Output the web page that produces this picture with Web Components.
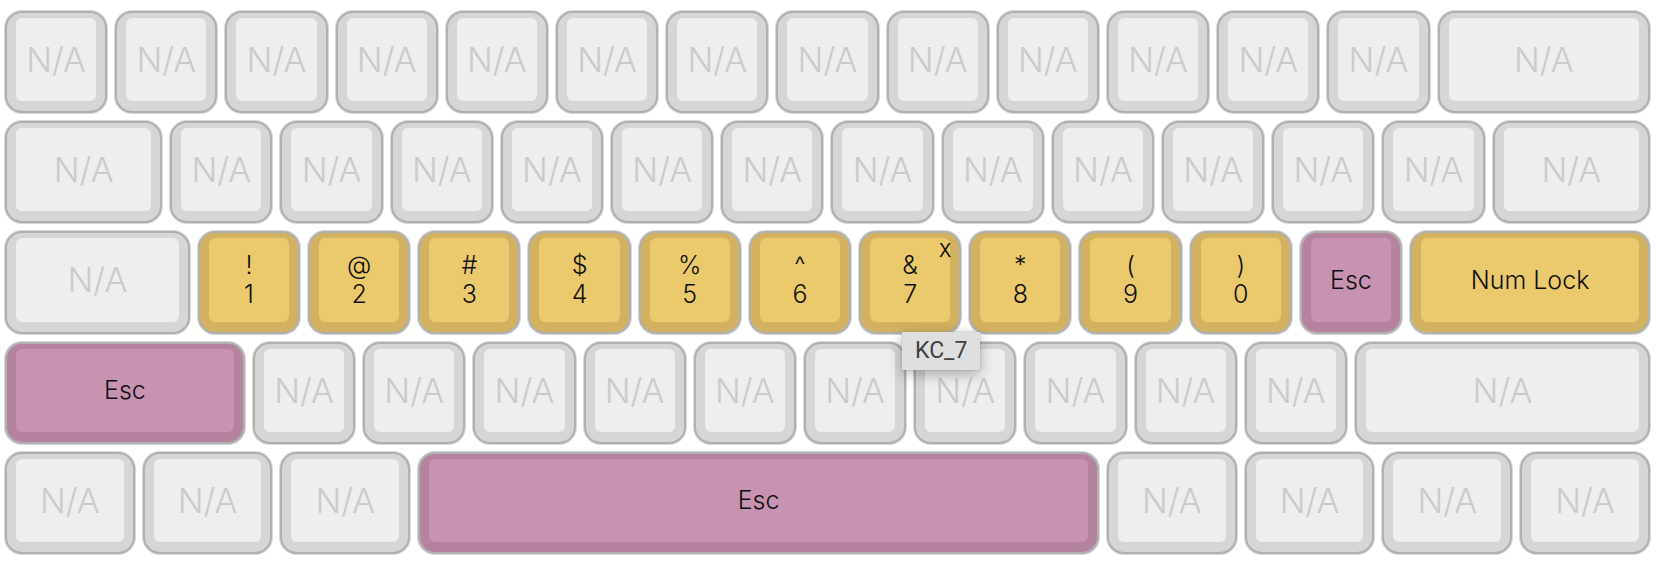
<!DOCTYPE html>
<html lang="en">
<head>
<meta charset="utf-8">
<title>Keymap editor</title>
<style>
body { margin: 0; background: #fff; font-family: Inter, "Open Sans", sans-serif; }
</style>
</head>
<body>
<key-board></key-board>
<script>
// One keycap. Attributes: units (width in key units), tone, code (tooltip), hovered.
class KeyCap extends HTMLElement {
  connectedCallback() {
    const units = Number(this.getAttribute('units') || 1);
    const root = this.attachShadow({ mode: 'open' });
    root.innerHTML = `
      <style>
        :host {
          --edge: #d6d6d6; --face: #eeeeee; --ink: #cbcbcb;
          grid-column: span ${units * 4};
          display: grid; position: relative; margin: 4px; min-width: 0; min-height: 0;
        }
        :host([tone="key"]) { --edge: #d2b261; --face: #eaca6d; --ink: #101010; }
        :host([tone="any"]) { --edge: #b5829f; --face: #c892b2; --ink: #101010; }
        :host([hovered]) { z-index: 1; }
        .cap {
          display: grid; box-sizing: border-box; width: 100%; height: 100%; margin: 0;
          padding: 5px 9px 10px; border: 2px solid #b0b0b0; border-radius: 17px;
          box-shadow: 0 0 0 1px #d8d8d8; background: var(--edge); color: var(--ink);
          font: inherit; cursor: pointer;
        }
        .face {
          display: flex; flex-direction: column; align-items: center; justify-content: center;
          padding-top: 1px; border-radius: 6px; background: var(--face);
          font-size: 34px; line-height: 40px; font-weight: 300; white-space: nowrap;
        }
        :host([tone]) .face { font-size: 25px; line-height: 29px; }
        .remove {
          position: absolute; top: 9px; right: 8px; padding: 0 2px; border: 0; background: none;
          font: inherit; font-size: 18px; line-height: 22px;
          color: #101010; cursor: pointer;
        }
        .tip {
          position: absolute; top: 101px; left: 43px; padding: 0 13px;
          background: #dfdfdf; color: #404040; font-family: Roboto, sans-serif; font-size: 23px; line-height: 38px;
          box-shadow: 0 0 1px #888, 0 4px 14px rgba(0, 0, 0, .3); white-space: nowrap;
        }
      </style>
      <button class="cap" type="button"><span class="face"><slot></slot></span></button>
      ${this.hasAttribute('hovered') ? `
        <button class="remove" type="button">X</button>
        <span class="tip" role="tooltip">${this.getAttribute('code')}</span>` : ''}`;
  }
}

const na = (units, count = 1) => `<key-cap units="${units}">N/A</key-cap>`.repeat(count);
const esc = units => `<key-cap units="${units}" tone="any">Esc</key-cap>`;
const digit = (shifted, plain) => `
  <key-cap tone="key" code="KC_${plain}" ${plain === '7' ? 'hovered' : ''}><span>${shifted}</span><span>${plain}</span></key-cap>`;

// The 60% board: 15 units wide, split into quarter-unit columns.
class KeyBoard extends HTMLElement {
  connectedCallback() {
    const digits = [['!', '1'], ['@', '2'], ['#', '3'], ['$', '4'], ['%', '5'],
      ['^', '6'], ['&amp;', '7'], ['*', '8'], ['(', '9'], [')', '0']];
    this.attachShadow({ mode: 'open' }).innerHTML = `
      <style>
        :host { display: block; padding: 7px 4px 3px 1px; }
        .board {
          display: grid; aspect-ratio: 3 / 1;
          grid-template-columns: repeat(60, minmax(0, 1fr));
          grid-template-rows: repeat(5, minmax(0, 1fr));
        }
      </style>
      <div class="board">
        ${na(1, 13)}${na(2)}
        ${na(1.5)}${na(1, 12)}${na(1.5)}
        ${na(1.75)}${digits.map(([a, b]) => digit(a, b)).join('')}${esc(1)}<key-cap units="2.25" tone="key">Num Lock</key-cap>
        ${esc(2.25)}${na(1, 10)}${na(2.75)}
        ${na(1.25, 3)}${esc(6.25)}${na(1.25, 4)}
      </div>`;
  }
}
customElements.define('key-cap', KeyCap);
customElements.define('key-board', KeyBoard);
</script>
</body>
</html>
